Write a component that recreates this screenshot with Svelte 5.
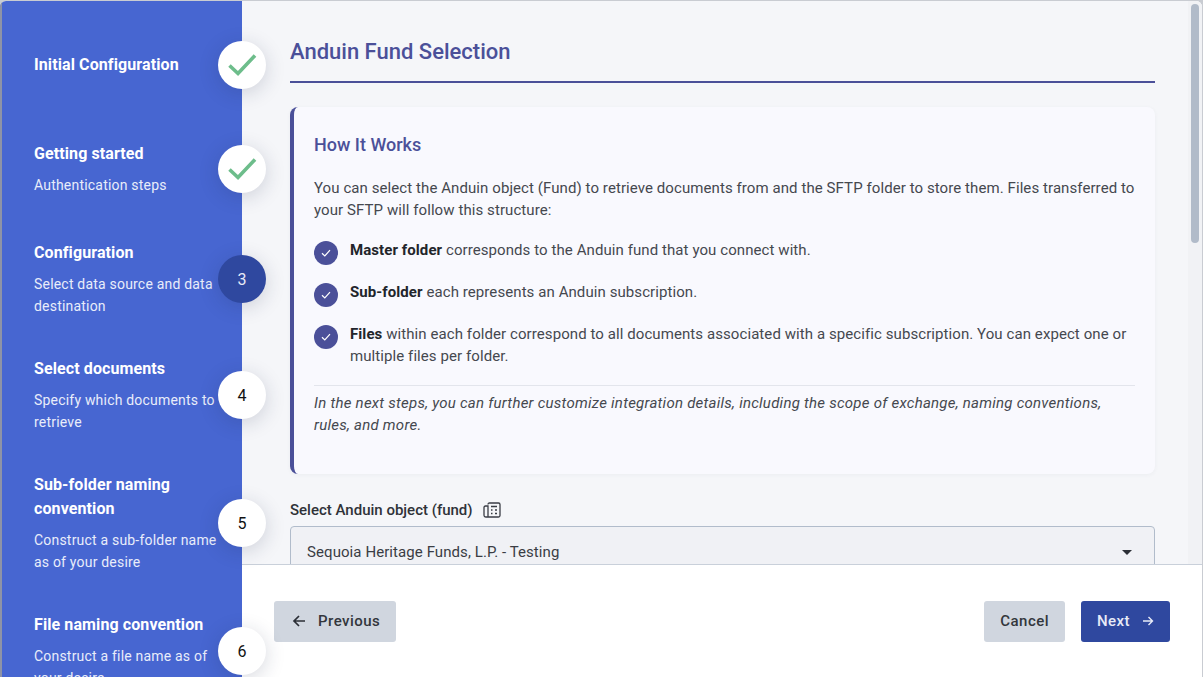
<script>
	const steps = [
		{ title: 'Initial Configuration', sub: '', done: true },
		{ title: 'Getting started', sub: 'Authentication steps', done: true },
		{ title: 'Configuration', sub: 'Select data source and data destination', active: true },
		{ title: 'Select documents', sub: 'Specify which documents to retrieve' },
		{ title: 'Sub-folder naming convention', sub: 'Construct a sub-folder name as of your desire' },
		{ title: 'File naming convention', sub: 'Construct a file name as of your desire' }
	]
</script>

<div class="window">
	<aside class="sidebar">
		{#each steps as step, i}
			<div class="step">
				<div class="step-title">{step.title}</div>
				{#if step.sub}
					<div class="step-sub">{step.sub}</div>
				{/if}
				<div class="circle" class:active={step.active}>
					{#if step.done}
						<svg width="32" height="32" viewBox="0 0 32 32" fill="none">
							<path d="M3.5 16.5 L12 24.5 L29 6.5" stroke="#6dbd8b" stroke-width="3.6" />
						</svg>
					{:else}
						{i + 1}
					{/if}
				</div>
			</div>
		{/each}
	</aside>

	<div class="main">
		<div class="scroll-wrap">
			<div class="scroll">
				<h1>Anduin Fund Selection</h1>

				<section class="card">
					<h2>How It Works</h2>
					<p>You can select the Anduin object (Fund) to retrieve documents from and the SFTP folder to store them. Files transferred to your SFTP will follow this structure:</p>
					<ul>
						<li>
							<span class="tick">
								<svg width="12" height="12" viewBox="0 0 12 12" fill="none">
									<path d="M2 6.3 L4.8 9 L10 3.2" stroke="#fff" stroke-width="1.2" />
								</svg>
							</span>
							<span><b>Master folder</b> corresponds to the Anduin fund that you connect with.</span>
						</li>
						<li>
							<span class="tick">
								<svg width="12" height="12" viewBox="0 0 12 12" fill="none">
									<path d="M2 6.3 L4.8 9 L10 3.2" stroke="#fff" stroke-width="1.2" />
								</svg>
							</span>
							<span><b>Sub-folder</b> each represents an Anduin subscription.</span>
						</li>
						<li>
							<span class="tick">
								<svg width="12" height="12" viewBox="0 0 12 12" fill="none">
									<path d="M2 6.3 L4.8 9 L10 3.2" stroke="#fff" stroke-width="1.2" />
								</svg>
							</span>
							<span><b>Files</b> within each folder correspond to all documents associated with a specific subscription. You can expect one or multiple files per folder.</span>
						</li>
					</ul>
					<p class="note">In the next steps, you can further customize integration details, including the scope of exchange, naming conventions, rules, and more.</p>
				</section>

				<div class="field-label">
					Select Anduin object (fund)
					<svg width="18" height="16" viewBox="0 0 18 16" fill="none" stroke="#3a3d45" stroke-width="1.3">
						<path d="M5 2.5 Q5 1 6.5 1 H15.5 Q17 1 17 2.5 V13.5 Q17 15 15.5 15 H3 Q1 15 1 13 V5.5 Q1 4 2.5 4 H5 V15" />
						<path d="M8 4.5 H14 M8 8 H9.5 M12 8 H14 M8 11.5 H9.5 M12 11.5 H14" />
					</svg>
				</div>
				<div class="select">
					<span>Sequoia Heritage Funds, L.P. - Testing</span>
					<span class="caret"></span>
				</div>
			</div>
			<div class="track"><div class="thumb"></div></div>
		</div>

		<footer>
			<button class="btn grey">
				<svg width="14" height="14" viewBox="0 0 14 14" fill="none" stroke="#2b2f36" stroke-width="1.7">
					<path d="M13 7 H2 M7 2 L2 7 L7 12" />
				</svg>
				Previous
			</button>
			<div class="right">
				<button class="btn grey short">Cancel</button>
				<button class="btn primary">
					Next
					<svg width="12" height="12" viewBox="0 0 12 12" fill="none" stroke="#e8ebf7" stroke-width="1.4">
						<path d="M1 6 H10.5 M6.5 2 L10.5 6 L6.5 10" />
					</svg>
				</button>
			</div>
		</footer>
	</div>
</div>

<style>
	:global(body) {
		margin: 0;
		background: #c9ccd2;
		font-family: Roboto, "Liberation Sans", sans-serif;
	}
	.window {
		display: flex;
		height: 676px;
		margin: 1px 1px 0 0;
		border-radius: 6px 6px 0 0;
		overflow: hidden;
		background: #fff;
	}
	.sidebar {
		width: 242px;
		flex: none;
		box-sizing: border-box;
		padding: 52px 0 0 32px;
		background: #4766d1;
		border-left: 2px solid #8e93a6;
		color: #fff;
		position: relative;
		z-index: 2;
	}
	.step {
		position: relative;
		padding-right: 25px;
		margin-bottom: 40px;
	}
	.step:nth-child(1) {
		margin-bottom: 65px;
	}
	.step:nth-child(2) {
		margin-bottom: 45px;
	}
	.step-title {
		font-size: 16px;
		font-weight: 700;
		line-height: 24px;
		letter-spacing: 0.1px;
	}
	.step-sub {
		margin-top: 8px;
		font-size: 14px;
		line-height: 22px;
		letter-spacing: 0.2px;
		color: #e9edfa;
	}
	.circle {
		position: absolute;
		top: 50%;
		right: -24px;
		width: 48px;
		height: 48px;
		margin-top: -24px;
		border-radius: 50%;
		background: #fff;
		color: #111;
		font-size: 16px;
		display: flex;
		align-items: center;
		justify-content: center;
		box-shadow: 0 4px 20px rgba(30, 40, 70, 0.18);
	}
	.circle.active {
		background: #2f489f;
		color: #e8ebf7;
	}
	.main {
		flex: 1;
		min-width: 0;
		display: flex;
		flex-direction: column;
	}
	.scroll-wrap {
		flex: 1;
		min-height: 0;
		position: relative;
	}
	.scroll {
		height: 100%;
		overflow: hidden;
		box-sizing: border-box;
		padding: 34px 47px 0 48px;
		background: #f5f6f9;
	}
	.track {
		position: absolute;
		top: 0;
		right: 0;
		bottom: 0;
		width: 14px;
		background: #f1f2f5;
	}
	.thumb {
		width: 8px;
		height: 239px;
		margin: 3px 0 0 3px;
		border-radius: 4px;
		background: #b1bbc9;
	}
	h1 {
		margin: 0 0 24px;
		padding-bottom: 12px;
		border-bottom: 2px solid #4b5099;
		font-size: 22px;
		line-height: 34px;
		font-weight: 500;
		color: #4b5099;
	}
	.card {
		box-sizing: border-box;
		height: 367px;
		padding: 25px 20px 0 20px;
		background: #f9f9fe;
		border-left: 4px solid #4b5099;
		border-radius: 8px;
		box-shadow: 0 1px 4px rgba(60, 70, 100, 0.05);
		font-size: 15px;
		line-height: 22px;
		letter-spacing: 0.08px;
		color: #45484f;
	}
	h2 {
		margin: 0 0 19px;
		font-size: 18px;
		line-height: 26px;
		font-weight: 500;
		letter-spacing: 0;
		color: #4b5099;
	}
	p {
		margin: 0;
	}
	ul {
		list-style: none;
		margin: 18px 0 0;
		padding: 0 0 18px;
		border-bottom: 1px solid #e3e5ec;
	}
	li {
		display: flex;
		gap: 12px;
		margin-bottom: 16px;
	}
	li:last-child {
		margin-bottom: 0;
	}
	.tick {
		flex: none;
		width: 24px;
		height: 24px;
		margin-top: 2px;
		border-radius: 50%;
		background: #4b5099;
		display: flex;
		align-items: center;
		justify-content: center;
	}
	b {
		font-weight: 700;
		color: #22252b;
	}
	.note {
		margin-top: 6px;
		font-style: italic;
		letter-spacing: 0.25px;
	}
	.field-label {
		display: flex;
		align-items: center;
		gap: 10px;
		margin-top: 25px;
		font-size: 15px;
		line-height: 22px;
		font-weight: 500;
		color: #2f3238;
	}
	.select {
		box-sizing: border-box;
		height: 52px;
		margin-top: 5px;
		padding: 0 22px 0 16px;
		display: flex;
		align-items: center;
		justify-content: space-between;
		background: #f0f1f5;
		border: 1px solid #b1bccb;
		border-radius: 4px;
		font-size: 15px;
		letter-spacing: 0.08px;
		color: #3a3d44;
	}
	.caret {
		width: 0;
		height: 0;
		border-left: 5px solid transparent;
		border-right: 5px solid transparent;
		border-top: 5px solid #2b2f36;
	}
	footer {
		flex: none;
		height: 113px;
		box-sizing: border-box;
		padding: 36px 32px 0;
		display: flex;
		justify-content: space-between;
		align-items: flex-start;
		background: #fff;
		border-top: 1px solid #c9d0da;
	}
	.right {
		display: flex;
		gap: 16px;
	}
	.btn {
		height: 41px;
		border: 0;
		border-radius: 3px;
		padding: 0 16px 1px;
		display: flex;
		align-items: center;
		font-family: inherit;
		font-size: 15px;
		font-weight: 500;
		letter-spacing: 0.45px;
	}
	.grey {
		gap: 12px;
		padding-left: 18px;
		background: #d0d6df;
		color: #33363c;
	}
	.grey.short {
		padding-left: 16px;
	}
	.primary {
		gap: 12px;
		background: #2f489f;
		color: #e8ebf7;
	}
</style>
